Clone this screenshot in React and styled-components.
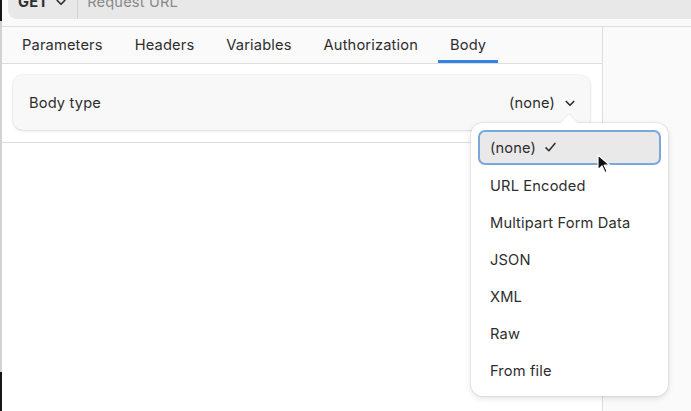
import styled, { createGlobalStyle } from 'styled-components';

const GlobalStyle = createGlobalStyle`
  html, body {
    margin: 0;
    padding: 0;
    background: #ffffff;
  }
  body {
    font-family: Inter, "Noto Sans", sans-serif;
    font-size: 14.67px;
    letter-spacing: 0.15px;
    color: #2e2e2e;
  }
`;

const Screen = styled.div`
  display: flex;
  width: 691px;
  height: 411px;
  overflow: hidden;
  position: relative;
`;

const EdgeStrip = styled.div`
  display: flex;
  flex-direction: column;
  width: 2px;
  flex-shrink: 0;
`;

const EdgePiece = styled.div`
  height: ${p => p.h ? `${p.h}px` : 'auto'};
  flex: ${p => p.h ? 'none' : 1};
  background: ${p => p.dark ? '#14161c' : '#d2d2d2'};
`;

const Main = styled.div`
  flex: 1;
  display: flex;
  flex-direction: column;
  min-width: 0;
`;

const Header = styled.div`
  height: 26px;
  flex-shrink: 0;
  background: #fafafa;
  border-bottom: 1px solid #dedede;
  padding-left: 6px;
  overflow: hidden;
`;

const UrlBar = styled.div`
  display: flex;
  align-items: center;
  height: 34px;
  margin-top: -15px;
  background: #e8e8e8;
  border-radius: 0 0 0 9px;
`;

const MethodButton = styled.div`
  display: flex;
  align-items: center;
  gap: 7px;
  padding: 0 10px 0 10px;
  height: 100%;
  font-weight: 700;
  border-right: 1px solid #d4d4d4;
`;

const UrlPlaceholder = styled.div`
  padding-left: 9px;
  color: #8a8a8a;
`;

const Workspace = styled.div`
  flex: 1;
  display: flex;
  min-height: 0;
`;

const RequestPane = styled.div`
  width: 600px;
  flex-shrink: 0;
  border-right: 1px solid #dedede;
  display: flex;
  flex-direction: column;
  background: #ffffff;
`;

const SidePane = styled.div`
  flex: 1;
  background: #fafafa;
`;

const TabBar = styled.div`
  display: flex;
  gap: 8px;
  height: 36px;
  padding-left: 8px;
  background: #fafafa;
  border-bottom: 1px solid #dedede;
`;

const Tab = styled.div`
  display: flex;
  align-items: center;
  padding: 0 12px;
  position: relative;
  color: #2e2e2e;
  &::after {
    content: '';
    position: absolute;
    left: 0;
    right: 0;
    bottom: 0;
    height: 3px;
    background: ${p => p.active ? '#3584e4' : 'transparent'};
  }
`;

const BodySection = styled.div`
  padding: 11px 12px 12px 11px;
  border-bottom: 1px solid #dedede;
`;

const Card = styled.div`
  display: flex;
  align-items: center;
  justify-content: space-between;
  height: 55px;
  padding: 0 14px 0 16px;
  background: #f8f8f8;
  border-radius: 10px;
  box-shadow: 0 0 0 1px rgba(0, 0, 0, 0.03), 0 1px 3px rgba(0, 0, 0, 0.12);
`;

const Picker = styled.div`
  display: flex;
  align-items: center;
  gap: 9px;
`;

const Popover = styled.div`
  position: absolute;
  left: 471px;
  top: 123px;
  width: 197px;
  padding: 7px;
  box-sizing: border-box;
  background: #ffffff;
  border-radius: 12px;
  box-shadow: 0 0 0 1px rgba(0, 0, 0, 0.05), 0 2px 6px rgba(0, 0, 0, 0.13);
  display: flex;
  flex-direction: column;
  &::before {
    content: '';
    position: absolute;
    top: -6px;
    left: 92px;
    width: 12px;
    height: 12px;
    background: #ffffff;
    transform: rotate(45deg);
    box-shadow: -1px -1px 0 rgba(0, 0, 0, 0.04);
  }
`;

const MenuItem = styled.div`
  position: relative;
  display: flex;
  align-items: center;
  gap: 8px;
  box-sizing: border-box;
  padding-left: ${p => p.selected ? '10px' : '12px'};
  border-radius: 7px;
  background: ${p => p.selected ? '#e9e9e9' : 'transparent'};
  border: ${p => p.selected ? '2px solid #7ca7dc' : 'none'};
  height: ${p => p.selected ? '35px' : '37px'};
  margin-bottom: ${p => p.selected ? '2px' : '0'};
`;

const Cursor = styled.svg`
  position: absolute;
  left: 597px;
  top: 154px;
`;

const Chevron = () => (
  <svg width="12" height="12" viewBox="0 0 16 16">
    <path d="M3 6l5 5 5-5" fill="none" stroke="#2e2e2e" strokeWidth="2.2" strokeLinecap="round" strokeLinejoin="round" />
  </svg>
);

const Check = () => (
  <svg width="13" height="13" viewBox="0 0 16 16">
    <path d="M2.5 8.5l3.5 3.5 7.5-9" fill="none" stroke="#2e2e2e" strokeWidth="1.9" strokeLinecap="round" strokeLinejoin="round" />
  </svg>
);

const tabs = ['Parameters', 'Headers', 'Variables', 'Authorization', 'Body'];
const bodyTypes = ['(none)', 'URL Encoded', 'Multipart Form Data', 'JSON', 'XML', 'Raw', 'From file'];

export default function App() {
  return (
    <>
      <GlobalStyle />
      <Screen>
        <EdgeStrip>
          <EdgePiece dark h={21} />
          <EdgePiece />
          <EdgePiece dark h={39} />
        </EdgeStrip>
        <Main>
          <Header>
            <UrlBar>
              <MethodButton>
                GET <Chevron />
              </MethodButton>
              <UrlPlaceholder>Request URL</UrlPlaceholder>
            </UrlBar>
          </Header>
          <Workspace>
            <RequestPane>
              <TabBar>
                {tabs.map(tab => (
                  <Tab key={tab} active={tab === 'Body'}>{tab}</Tab>
                ))}
              </TabBar>
              <BodySection>
                <Card>
                  <span>Body type</span>
                  <Picker>
                    (none) <Chevron />
                  </Picker>
                </Card>
              </BodySection>
            </RequestPane>
            <SidePane />
          </Workspace>
        </Main>
        <Popover>
          {bodyTypes.map((type, i) => (
            <MenuItem key={type} selected={i === 0}>
              {type}
              {i === 0 && <Check />}
            </MenuItem>
          ))}
        </Popover>
        <Cursor width="13" height="20" viewBox="0 0 13 20">
          <path d="M1 1v15l4-4 3 6.5 2.2-1-3-6.3h5.6z" fill="#111" stroke="#fff" strokeWidth="1.2" strokeLinejoin="round" />
        </Cursor>
      </Screen>
    </>
  );
}
